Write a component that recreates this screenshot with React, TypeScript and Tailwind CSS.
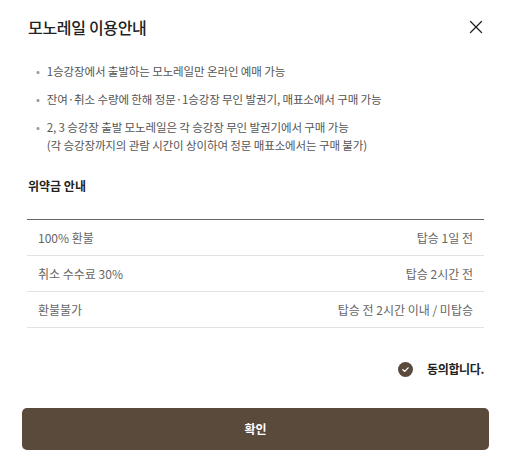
import {X} from 'lucide-react';

const NOTICES = [
  ['1승강장에서 출발하는 모노레일만 온라인 예매 가능'],
  ['잔여·취소 수량에 한해 정문·1승강장 무인 발권기, 매표소에서 구매 가능'],
  [
    '2, 3 승강장 출발 모노레일은 각 승강장 무인 발권기에서 구매 가능',
    '(각 승강장까지의 관람 시간이 상이하여 정문 매표소에서는 구매 불가)',
  ],
];

const PENALTIES = [
  {label: '100% 환불', when: '탑승 1일 전'},
  {label: '취소 수수료 30%', when: '탑승 2시간 전'},
  {label: '환불불가', when: '탑승 전 2시간 이내 / 미탑승'},
];

export default function App() {
  return (
    <div
      className="w-[511px] h-[473px] bg-white text-[#222] overflow-hidden"
      style={{fontFamily: '"Noto Sans CJK KR", "Noto Sans", sans-serif'}}
    >
      {/* Header */}
      <div className="flex items-center justify-between pl-[28px] pr-[24px] pt-[13px] h-[40px]">
        <h2 className="text-[16px] font-medium tracking-[-0.02em] leading-none">
          모노레일 이용안내
        </h2>
        <X className="w-[22px] h-[22px] text-[#222]" strokeWidth={1.4} />
      </div>

      {/* Notices */}
      <ul className="mt-[22px] pl-[36px] pr-[20px] flex flex-col gap-[10px] text-[11.5px] text-[#555] tracking-[-0.01em]">
        {NOTICES.map((lines, i) => (
          <li key={i} className="flex gap-[7px] leading-[18px]">
            <span className="text-[#999]">•</span>
            <div>
              {lines.map((l) => (
                <p key={l}>{l}</p>
              ))}
            </div>
          </li>
        ))}
      </ul>

      {/* Penalty */}
      <h3 className="mt-[24px] pl-[28px] text-[12px] font-bold leading-[16px]">
        위약금 안내
      </h3>
      <div className="mt-[25px] mx-[27px] border-t border-[#666]">
        {PENALTIES.map((row) => (
          <div
            key={row.label}
            className="flex items-center justify-between h-[36px] px-[11px] border-b border-[#e2e2e2] text-[12px] text-[#666]"
          >
            <span>{row.label}</span>
            <span>{row.when}</span>
          </div>
        ))}
      </div>

      {/* Agree */}
      <div className="mt-[32px] flex items-center justify-end gap-[14px] pr-[27px]">
        <span className="w-[15px] h-[15px] rounded-full bg-[#5a4a3c] flex items-center justify-center">
          <svg viewBox="0 0 12 12" className="w-[9px] h-[9px]">
            <path
              d="M2.5 6.2 L5 8.5 L9.5 3.8"
              fill="none"
              stroke="white"
              strokeWidth="1.8"
              strokeLinecap="round"
              strokeLinejoin="round"
            />
          </svg>
        </span>
        <span className="text-[12px] font-bold tracking-[-0.03em]">동의합니다.</span>
      </div>

      {/* Confirm */}
      <div className="mt-[30px] px-[22px]">
        <button className="w-full h-[42px] rounded-[5px] bg-[#5a4a3c] text-white text-[12px] font-bold">
          확인
        </button>
      </div>
    </div>
  );
}
